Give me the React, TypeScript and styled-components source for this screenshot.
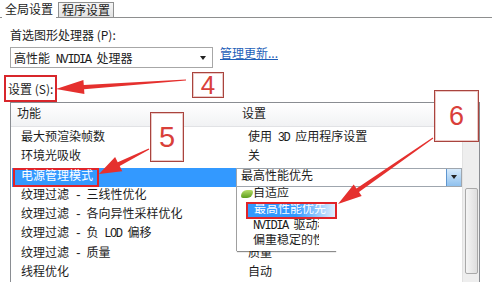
import React from 'react';
import styled, { createGlobalStyle } from 'styled-components';

const GlobalStyle = createGlobalStyle`
  html, body { margin: 0; padding: 0; background: #fff; }
  body {
    font-family: "Liberation Mono", "Noto Sans CJK SC", monospace;
    font-size: 12px;
    color: #1c1c1c;
  }
`;

const Window = styled.div`
  position: relative;
  width: 492px;
  height: 282px;
  overflow: hidden;
  background: #fff;
`;

const TabBar = styled.div`
  display: flex;
  align-items: flex-end;
  height: 17px;
  padding-left: 2px;
  border-bottom: 1px solid #8e8f8f;
  font-family: "Noto Sans CJK SC", sans-serif;
`;

const Tab = styled.div<{ $active?: boolean }>`
  box-sizing: border-box;
  padding: 0 3px;
  margin-right: 2px;
  height: ${p => (p.$active ? 17 : 15)}px;
  line-height: ${p => (p.$active ? 16 : 14)}px;
  margin-bottom: ${p => (p.$active ? -1 : 0)}px;
  background: ${p => (p.$active ? '#fff' : 'linear-gradient(#f6f6f6, #e2e2e2)')};
  border: ${p => (p.$active ? 'none' : '1px solid #8e8f8f')};
  border-bottom: none;
`;

const Pane = styled.div`
  padding-left: 10px;
`;

const FieldLabel = styled.div`
  margin-top: 9px;
  height: 16px;
  line-height: 16px;
  font-family: "Noto Sans CJK SC", sans-serif;
`;

const SelectRow = styled.div`
  display: flex;
  align-items: flex-start;
  margin-top: 4px;
`;

const Select = styled.div`
  box-sizing: border-box;
  width: 203px;
  height: 21px;
  border: 1px solid #a7a7a7;
  display: flex;
  align-items: center;
  justify-content: space-between;
  padding: 1px 6px 0 3px;
  white-space: pre;
`;

const Caret = styled.span`
  width: 0;
  height: 0;
  border-left: 3px solid transparent;
  border-right: 3px solid transparent;
  border-top: 4px solid #222;
`;

const Link = styled.span`
  margin: -1px 0 0 7px;
  line-height: 14px;
  color: #1f5fb8;
  text-decoration: underline;
  font-family: "Noto Sans CJK SC", sans-serif;
`;

const Latin = styled.span`
  letter-spacing: -1.4px;
`;

const SectionLabel = styled.div`
  box-sizing: border-box;
  display: inline-flex;
  align-items: center;
  margin: 7px 0 0 -6px;
  height: 27px;
  padding: 0 2px;
  border: 2px solid #d8262b;
  font-family: "Noto Sans CJK SC", sans-serif;
`;

const Table = styled.div`
  box-sizing: border-box;
  width: 470px;
  height: 200px;
  border: 1px solid #8a8d92;
  display: grid;
  grid-template-columns: 1fr 17px;
`;

const Rows = styled.div`
  display: flex;
  flex-direction: column;
`;

const Header = styled.div`
  display: grid;
  grid-template-columns: 225px 1fr;
  height: 23px;
  line-height: 20px;
  background: linear-gradient(#ffffff, #f1f2f4);
  border-bottom: 1px solid #e1e2e5;
  font-family: "Noto Sans CJK SC", sans-serif;
`;

const HeadCell = styled.div`
  padding-left: 6px;
`;

const Body = styled.div`
  padding-top: 2px;
`;

const Row = styled.div`
  display: grid;
  grid-template-columns: 225px 1fr;
  height: 19.3px;
  line-height: 19px;
  white-space: nowrap;
`;

const NameCell = styled.div<{ $selected?: boolean }>`
  padding-left: ${p => (p.$selected ? 1 : 10)}px;
  margin-left: ${p => (p.$selected ? 1 : 0)}px;
  background: ${p => (p.$selected ? '#3399ff' : 'transparent')};
  color: ${p => (p.$selected ? '#fff' : 'inherit')};
`;

const Marked = styled.span`
  box-sizing: border-box;
  display: inline-block;
  height: 19px;
  line-height: 15px;
  padding: 0 4px 0 6px;
  border: 2px solid #e0242a;
`;

const ValueCell = styled.div`
  position: relative;
  padding-left: 12px;
`;

const Combo = styled.div`
  position: absolute;
  inset: 0;
  box-sizing: border-box;
  border: 1px solid #9fa6ae;
  background: #fff;
  display: flex;
  align-items: center;
  justify-content: space-between;
  padding-left: 4px;
`;

const ComboButton = styled.div`
  box-sizing: border-box;
  width: 15px;
  height: 100%;
  background: linear-gradient(#d8ebfc, #8fc1ee);
  border-left: 1px solid #5f96cf;
  display: flex;
  align-items: center;
  justify-content: center;
`;

const DropList = styled.div`
  position: absolute;
  top: 19px;
  left: 0;
  width: 100px;
  padding: 0 0 2px;
  background: #fff;
  border-left: 1px solid #a0a0a0;
  box-shadow: 0 2px 1px -1px rgba(0, 0, 0, 0.45);
  z-index: 2;
`;

const Item = styled.div<{ $active?: boolean }>`
  box-sizing: border-box;
  display: flex;
  align-items: center;
  height: ${p => (p.$active ? 17 : 15)}px;
  line-height: 15px;
  overflow: hidden;
  white-space: pre;
  margin-left: ${p => (p.$active ? 9 : 0)}px;
  padding-left: ${p => (p.$active ? 6 : 16)}px;
  max-width: ${p => (p.$active ? 'none' : '82px')};
  color: ${p => (p.$active ? '#fff' : 'inherit')};
  background: ${p => (p.$active ? 'linear-gradient(to right, #3399ff 55%, rgba(51,153,255,0.15))' : 'transparent')};
  border: ${p => (p.$active ? '2px solid #e0242a' : 'none')};
`;

const Leaf = styled.span`
  flex: none;
  width: 12px;
  height: 8px;
  margin: 0 0 0 -12px;
  border-radius: 6px 2px 6px 2px;
  background: linear-gradient(#b6dd6a, #5c9e1c);
`;

const Scrollbar = styled.div`
  display: flex;
  flex-direction: column;
  align-items: center;
  background: #eeeeee;
  border-left: 1px solid #e2e2e2;
`;

const ScrollArrow = styled.div`
  margin-top: 7px;
  width: 0;
  height: 0;
  border-left: 3px solid transparent;
  border-right: 3px solid transparent;
  border-bottom: 3px solid #444;
`;

const Thumb = styled.div`
  box-sizing: border-box;
  margin-top: 75px;
  width: 13px;
  height: 86px;
  border: 1px solid #a9a9a9;
  border-radius: 2px;
  background: linear-gradient(to right, #f5f5f5, #dedede);
`;

const Badge = styled.div<{ $size: number }>`
  position: absolute;
  box-sizing: border-box;
  display: flex;
  align-items: center;
  justify-content: center;
  background: #fff;
  border: 1px solid #a9443e;
  box-shadow: inset 0 0 0 1px #ecc9c6;
  color: #d9403a;
  font-family: "Liberation Sans", Arial, sans-serif;
  font-size: ${p => p.$size}px;
  z-index: 4;
`;

const Overlay = styled.svg`
  position: absolute;
  left: 0;
  top: 0;
  pointer-events: none;
  z-index: 5;
`;

// half-width runs are set tighter, as the dialog's font draws them
const mixed = (text: string) => (
  <span>
    {text.split(/([\x20-\x7e]+)/).map((part, i) =>
      /^[\x20-\x7e]+$/.test(part) ? <Latin key={i}>{part}</Latin> : part
    )}
  </span>
);

const arrow = (x1: number, y1: number, x2: number, y2: number, hl = 24, hw = 7, w0 = 0.6, w1 = 2.2) => {
  const dx = x2 - x1;
  const dy = y2 - y1;
  const L = Math.hypot(dx, dy);
  const ux = dx / L;
  const uy = dy / L;
  const nx = -uy;
  const ny = ux;
  const bx = x2 - ux * hl;
  const by = y2 - uy * hl;
  const p = (x: number, y: number) => `${x.toFixed(1)},${y.toFixed(1)}`;
  return [
    p(x1 + nx * w0, y1 + ny * w0),
    p(bx + nx * w1, by + ny * w1),
    p(bx + nx * hw, by + ny * hw),
    p(x2, y2),
    p(bx - nx * hw, by - ny * hw),
    p(bx - nx * w1, by - ny * w1),
    p(x1 - nx * w0, y1 - ny * w0),
  ].join(' ');
};

const rows: [string, string][] = [
  ['最大预渲染帧数', '使用 3D 应用程序设置'],
  ['环境光吸收', '关'],
  ['电源管理模式', ''],
  ['纹理过滤 - 三线性优化', ''],
  ['纹理过滤 - 各向异性采样优化', ''],
  ['纹理过滤 - 负 LOD 偏移', ''],
  ['纹理过滤 - 质量', '质量'],
  ['线程优化', '自动'],
];

function App() {
  return (
    <Window>
      <GlobalStyle />
      <TabBar>
        <Tab $active>全局设置</Tab>
        <Tab>程序设置</Tab>
      </TabBar>
      <Pane>
        <FieldLabel>首选图形处理器 (P):</FieldLabel>
        <SelectRow>
          <Select>
            {mixed('高性能 NVIDIA 处理器')}
            <Caret />
          </Select>
          <Link>管理更新...</Link>
        </SelectRow>
        <SectionLabel>设置 (S):</SectionLabel>
        <Table>
          <Rows>
            <Header>
              <HeadCell>功能</HeadCell>
              <HeadCell>设置</HeadCell>
            </Header>
            <Body>
              {rows.map(([name, value], i) =>
                i === 2 ? (
                  <Row key={name}>
                    <NameCell $selected>
                      <Marked>{name}</Marked>
                    </NameCell>
                    <ValueCell>
                      <Combo>
                        <span>最高性能优先</span>
                        <ComboButton>
                          <Caret />
                        </ComboButton>
                      </Combo>
                      <DropList>
                        <Item>
                          <Leaf />
                          <span>自适应</span>
                        </Item>
                        <Item $active>最高性能优先</Item>
                        <Item>{mixed('NVIDIA 驱动程序控制')}</Item>
                        <Item>偏重稳定的性能</Item>
                      </DropList>
                    </ValueCell>
                  </Row>
                ) : (
                  <Row key={name}>
                    <NameCell>{mixed(name)}</NameCell>
                    <ValueCell>{mixed(value)}</ValueCell>
                  </Row>
                )
              )}
            </Body>
          </Rows>
          <Scrollbar>
            <ScrollArrow />
            <Thumb />
          </Scrollbar>
        </Table>
      </Pane>

      <Badge $size={26} style={{ left: 192, top: 72, width: 32, height: 26 }}>4</Badge>
      <Badge $size={29} style={{ left: 150, top: 112, width: 34, height: 50 }}>5</Badge>
      <Badge $size={27} style={{ left: 434, top: 90, width: 45, height: 52 }}>6</Badge>

      <Overlay width={492} height={282} viewBox="0 0 492 282">
        <g fill="#e5302e">
          <polygon points={arrow(186, 80, 56, 89, 28, 7)} />
          <polygon points={arrow(149, 149, 99, 174, 22, 8)} />
          <polygon points={arrow(433, 138, 338, 204, 24, 7)} />
        </g>
      </Overlay>
    </Window>
  );
}

export default App;
